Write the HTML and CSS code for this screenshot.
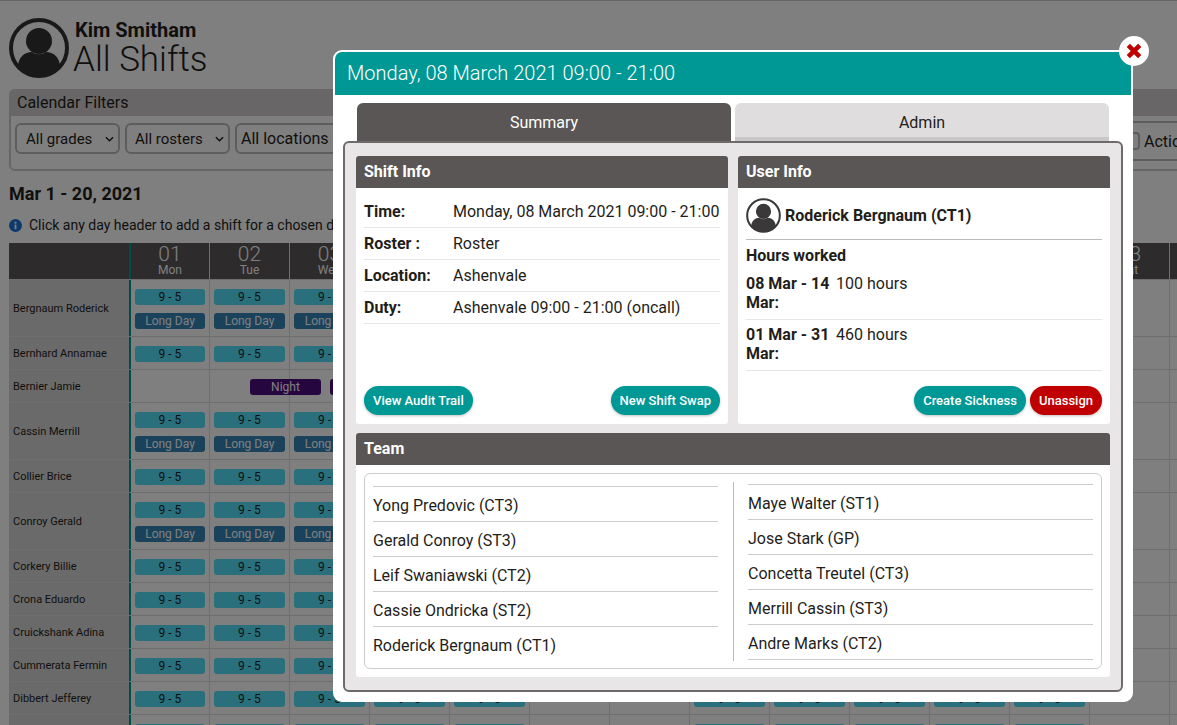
FILE: index.html
```html
<!DOCTYPE html>
<html lang="en">
<head>
    <meta charset="UTF-8">
    <title>All Shifts</title>
    <link rel="stylesheet" href="styles.css">
</head>
<body>
    <div class="page">
        <header class="page-head">
            <svg class="avatar avatar-lg" viewBox="0 0 60 60"><circle cx="30" cy="30" r="28" fill="#fff" stroke="#333" stroke-width="4"/><circle cx="30" cy="23" r="13" fill="#333"/><path d="M9 49c0-10 7-15 14-15 4 3 10 3 14 0 7 0 14 5 14 15-5 6-13 9-21 9s-16-3-21-9z" fill="#333"/></svg>
            <div class="page-titles">
                <div class="user-name">Kim Smitham</div>
                <h1>All Shifts</h1>
            </div>
        </header>

        <section class="filters">
            <div class="filters-title">Calendar Filters</div>
            <div class="filters-body">
                <div class="select select-grades">All grades<svg viewBox="0 0 10 6"><path d="M1 1l4 4 4-4" fill="none" stroke="#222" stroke-width="1.6"/></svg></div>
                <div class="select select-rosters">All rosters<svg viewBox="0 0 10 6"><path d="M1 1l4 4 4-4" fill="none" stroke="#222" stroke-width="1.6"/></svg></div>
                <div class="select select-locations">All locations<svg viewBox="0 0 10 6"><path d="M1 1l4 4 4-4" fill="none" stroke="#222" stroke-width="1.6"/></svg></div>
                <div class="filter-actions">
                    <span class="select-end"></span>
                    <span>Actions</span>
                </div>
            </div>
        </section>

        <h2 class="range">Mar 1 - 20, 2021</h2>
        <p class="hint">
            <svg viewBox="0 0 14 14"><circle cx="7" cy="7" r="7" fill="#1a73d8"/><rect x="6" y="6" width="2" height="5" fill="#fff"/><rect x="6" y="3" width="2" height="2" fill="#fff"/></svg>
            Click any day header to add a shift for a chosen day
        </p>

        <div class="calendar">
            <div class="cal-row cal-head">
                <div class="cal-name"></div>
                <div class="day"><b>01</b>Mon</div><div class="day"><b>02</b>Tue</div><div class="day"><b>03</b>Wed</div><div class="day"><b>04</b>Thu</div><div class="day"><b>05</b>Fri</div><div class="day"><b>06</b>Sat</div><div class="day"><b>07</b>Sun</div><div class="day"><b>08</b>Mon</div><div class="day"><b>09</b>Tue</div><div class="day"><b>10</b>Wed</div><div class="day"><b>11</b>Thu</div><div class="day"><b>12</b>Fri</div><div class="day"><b>13</b>Sat</div><div class="day"><b>14</b>Sun</div>
            </div>
            <div class="cal-row">
                <div class="cal-name">Bergnaum Roderick</div>
                <div class="cell"><span class="pill">9 - 5</span><span class="pill pill-long">Long Day</span></div><div class="cell"><span class="pill">9 - 5</span><span class="pill pill-long">Long Day</span></div><div class="cell"><span class="pill">9 - 5</span><span class="pill pill-long">Long Day</span></div><div class="cell"></div><div class="cell"></div><div class="cell"></div><div class="cell"></div><div class="cell"></div><div class="cell"></div><div class="cell"></div><div class="cell"></div><div class="cell"></div><div class="cell"></div><div class="cell"></div>
            </div>
            <div class="cal-row">
                <div class="cal-name">Bernhard Annamae</div>
                <div class="cell"><span class="pill">9 - 5</span></div><div class="cell"><span class="pill">9 - 5</span></div><div class="cell"><span class="pill">9 - 5</span></div><div class="cell"></div><div class="cell"></div><div class="cell"></div><div class="cell"></div><div class="cell"></div><div class="cell"></div><div class="cell"></div><div class="cell"></div><div class="cell"></div><div class="cell"></div><div class="cell"></div>
            </div>
            <div class="cal-row">
                <div class="cal-name">Bernier Jamie</div>
                <div class="cell"></div><div class="cell"><span class="pill pill-night">Night</span></div><div class="cell"><span class="pill pill-night">Night</span></div><div class="cell"></div><div class="cell"></div><div class="cell"></div><div class="cell"></div><div class="cell"></div><div class="cell"></div><div class="cell"></div><div class="cell"></div><div class="cell"></div><div class="cell"></div><div class="cell"></div>
            </div>
            <div class="cal-row">
                <div class="cal-name">Cassin Merrill</div>
                <div class="cell"><span class="pill">9 - 5</span><span class="pill pill-long">Long Day</span></div><div class="cell"><span class="pill">9 - 5</span><span class="pill pill-long">Long Day</span></div><div class="cell"><span class="pill">9 - 5</span><span class="pill pill-long">Long Day</span></div><div class="cell"></div><div class="cell"></div><div class="cell"></div><div class="cell"></div><div class="cell"></div><div class="cell"></div><div class="cell"></div><div class="cell"></div><div class="cell"></div><div class="cell"></div><div class="cell"></div>
            </div>
            <div class="cal-row">
                <div class="cal-name">Collier Brice</div>
                <div class="cell"><span class="pill">9 - 5</span></div><div class="cell"><span class="pill">9 - 5</span></div><div class="cell"><span class="pill">9 - 5</span></div><div class="cell"></div><div class="cell"></div><div class="cell"></div><div class="cell"></div><div class="cell"></div><div class="cell"></div><div class="cell"></div><div class="cell"></div><div class="cell"></div><div class="cell"></div><div class="cell"></div>
            </div>
            <div class="cal-row">
                <div class="cal-name">Conroy Gerald</div>
                <div class="cell"><span class="pill">9 - 5</span><span class="pill pill-long">Long Day</span></div><div class="cell"><span class="pill">9 - 5</span><span class="pill pill-long">Long Day</span></div><div class="cell"><span class="pill">9 - 5</span><span class="pill pill-long">Long Day</span></div><div class="cell"></div><div class="cell"></div><div class="cell"></div><div class="cell"></div><div class="cell"></div><div class="cell"></div><div class="cell"></div><div class="cell"></div><div class="cell"></div><div class="cell"></div><div class="cell"></div>
            </div>
            <div class="cal-row">
                <div class="cal-name">Corkery Billie</div>
                <div class="cell"><span class="pill">9 - 5</span></div><div class="cell"><span class="pill">9 - 5</span></div><div class="cell"><span class="pill">9 - 5</span></div><div class="cell"></div><div class="cell"></div><div class="cell"></div><div class="cell"></div><div class="cell"></div><div class="cell"></div><div class="cell"></div><div class="cell"></div><div class="cell"></div><div class="cell"></div><div class="cell"></div>
            </div>
            <div class="cal-row">
                <div class="cal-name">Crona Eduardo</div>
                <div class="cell"><span class="pill">9 - 5</span></div><div class="cell"><span class="pill">9 - 5</span></div><div class="cell"><span class="pill">9 - 5</span></div><div class="cell"></div><div class="cell"></div><div class="cell"></div><div class="cell"></div><div class="cell"></div><div class="cell"></div><div class="cell"></div><div class="cell"></div><div class="cell"></div><div class="cell"></div><div class="cell"></div>
            </div>
            <div class="cal-row">
                <div class="cal-name">Cruickshank Adina</div>
                <div class="cell"><span class="pill">9 - 5</span></div><div class="cell"><span class="pill">9 - 5</span></div><div class="cell"><span class="pill">9 - 5</span></div><div class="cell"></div><div class="cell"></div><div class="cell"></div><div class="cell"></div><div class="cell"></div><div class="cell"></div><div class="cell"></div><div class="cell"></div><div class="cell"></div><div class="cell"></div><div class="cell"></div>
            </div>
            <div class="cal-row">
                <div class="cal-name">Cummerata Fermin</div>
                <div class="cell"><span class="pill">9 - 5</span></div><div class="cell"><span class="pill">9 - 5</span></div><div class="cell"><span class="pill">9 - 5</span></div><div class="cell"></div><div class="cell"></div><div class="cell"></div><div class="cell"></div><div class="cell"></div><div class="cell"></div><div class="cell"></div><div class="cell"></div><div class="cell"></div><div class="cell"></div><div class="cell"></div>
            </div>
            <div class="cal-row">
                <div class="cal-name">Dibbert Jefferey</div>
                <div class="cell"><span class="pill">9 - 5</span></div><div class="cell"><span class="pill">9 - 5</span></div><div class="cell"><span class="pill">9 - 5</span></div><div class="cell"><span class="pill">9 - 5</span></div><div class="cell"><span class="pill">9 - 5</span></div><div class="cell"></div><div class="cell"></div><div class="cell"><span class="pill">9 - 5</span></div><div class="cell"><span class="pill">9 - 5</span></div><div class="cell"><span class="pill">9 - 5</span></div><div class="cell"><span class="pill">9 - 5</span></div><div class="cell"><span class="pill">9 - 5</span></div><div class="cell"></div><div class="cell"></div>
            </div>
            <div class="cal-row">
                <div class="cal-name">Durgan Lilla</div>
                <div class="cell"><span class="pill">9 - 5</span></div><div class="cell"><span class="pill">9 - 5</span></div><div class="cell"><span class="pill">9 - 5</span></div><div class="cell"><span class="pill">9 - 5</span></div><div class="cell"><span class="pill">9 - 5</span></div><div class="cell"></div><div class="cell"></div><div class="cell"><span class="pill">9 - 5</span></div><div class="cell"><span class="pill">9 - 5</span></div><div class="cell"><span class="pill">9 - 5</span></div><div class="cell"><span class="pill">9 - 5</span></div><div class="cell"><span class="pill">9 - 5</span></div><div class="cell"></div><div class="cell"></div>
            </div>
        </div>
    </div>

    <div class="overlay"></div>

    <div class="modal">
        <button class="modal-close" type="button" aria-label="Close">
            <svg viewBox="0 0 14 14"><path d="M2 2l10 10M12 2L2 12" stroke="#c00000" stroke-width="4" fill="none"/></svg>
        </button>
        <div class="modal-title">Monday, 08 March 2021 09:00 - 21:00</div>
        <div class="tabs">
            <div class="tab tab-active">Summary</div>
            <div class="tab">Admin</div>
        </div>
        <div class="tab-body">
            <div class="panels">
                <section class="panel">
                    <h3 class="panel-head">Shift Info</h3>
                    <div class="panel-body">
                        <div class="info-row"><b>Time:</b><span>Monday, 08 March 2021 09:00 - 21:00</span></div>
                        <div class="info-row"><b>Roster :</b><span>Roster</span></div>
                        <div class="info-row"><b>Location:</b><span>Ashenvale</span></div>
                        <div class="info-row"><b>Duty:</b><span>Ashenvale 09:00 - 21:00 (oncall)</span></div>
                        <div class="panel-actions panel-actions-split">
                            <a class="btn">View Audit Trail</a>
                            <a class="btn">New Shift Swap</a>
                        </div>
                    </div>
                </section>
                <section class="panel">
                    <h3 class="panel-head">User Info</h3>
                    <div class="panel-body panel-body-user">
                        <div class="user-row">
                            <svg class="avatar avatar-sm" viewBox="0 0 60 60"><circle cx="30" cy="30" r="28" fill="#fff" stroke="#3a3839" stroke-width="3.5"/><circle cx="30" cy="23" r="13" fill="#3a3839"/><path d="M9 49c0-10 7-15 14-15 4 3 10 3 14 0 7 0 14 5 14 15-5 6-13 9-21 9s-16-3-21-9z" fill="#3a3839"/></svg>
                            <b>Roderick Bergnaum (CT1)</b>
                        </div>
                        <div class="hours-title">Hours worked</div>
                        <div class="hours-row"><b>08 Mar - 14 Mar:</b><span>100 hours</span></div>
                        <div class="hours-row"><b>01 Mar - 31 Mar:</b><span>460 hours</span></div>
                        <div class="panel-actions">
                            <a class="btn">Create Sickness</a>
                            <a class="btn btn-danger">Unassign</a>
                        </div>
                    </div>
                </section>
            </div>
            <section class="panel panel-team">
                <h3 class="panel-head">Team</h3>
                <div class="team-box">
                    <ul class="team-col team-col-left">
                        <li>Yong Predovic (CT3)</li>
                        <li>Gerald Conroy (ST3)</li>
                        <li>Leif Swaniawski (CT2)</li>
                        <li>Cassie Ondricka (ST2)</li>
                        <li>Roderick Bergnaum (CT1)</li>
                    </ul>
                    <ul class="team-col team-col-right">
                        <li>Maye Walter (ST1)</li>
                        <li>Jose Stark (GP)</li>
                        <li>Concetta Treutel (CT3)</li>
                        <li>Merrill Cassin (ST3)</li>
                        <li>Andre Marks (CT2)</li>
                    </ul>
                </div>
            </section>
        </div>
    </div>
</body>
</html>
```

FILE: styles.css
```css
* {
    box-sizing: border-box;
}

html, body {
    height: 100%;
}

body {
    margin: 0;
    overflow: hidden;
    background: #fff;
    color: #1f1e1a;
    font-family: Roboto, "Liberation Sans", sans-serif;
    font-size: 16px;
}

/* page behind the dialog */
.page {
    width: 1400px;
    padding: 18px 0 0 9px;
    border-top: 2px solid #ccc;
    margin-top: -1px;
}

.page-head {
    display: flex;
    align-items: center;
    gap: 4px;
    height: 60px;
    margin-top: -1px;
}

.avatar {
    display: block;
    flex: none;
}

.avatar-lg {
    width: 60px;
    height: 60px;
}

.avatar-sm {
    width: 35px;
    height: 35px;
}

.page-titles {
    padding-top: 2px;
}

.user-name {
    margin-left: 2px;
    font-size: 20px;
    font-weight: 700;
    line-height: 22px;
}

.page-titles h1 {
    margin: 0;
    font-size: 35px;
    font-weight: 300;
    line-height: 38px;
}

.filters {
    height: 82px;
    margin-top: 11px;
    border: 2px solid #ccc;
    border-radius: 6px;
}

.filters-title {
    height: 27px;
    margin: -2px -2px 0;
    padding-left: 8px;
    border-radius: 6px 6px 0 0;
    background: #d0cdcd;
    line-height: 27px;
}

.filters-body {
    display: flex;
    align-items: flex-start;
    padding: 7px 0 0 4px;
}

.select {
    display: flex;
    align-items: center;
    justify-content: space-between;
    height: 31px;
    padding: 0 4px 0 9px;
    margin-right: 5px;
    border: 2px solid #bbb;
    border-radius: 6px;
    font-size: 15px;
    white-space: nowrap;
}

.select svg {
    width: 9px;
    height: 6px;
}

.select-grades {
    width: 105px;
}

.select-rosters {
    width: 105px;
    padding-left: 8px;
}

.select-locations {
    width: 160px;
    padding-left: 4px;
    font-size: 16px;
}

.filter-actions {
    display: flex;
    align-items: center;
    gap: 4px;
    height: 40px;
    margin-top: -2px;
    margin-left: auto;
    width: 285px;
    border-top: 2px solid #bbb;
    border-bottom: 2px solid #bbb;
}

.select-end {
    width: 27px;
    height: 18px;
    border: 2px solid #bbb;
    border-radius: 0 4px 4px 0;
}

.range {
    margin: 12px 0 0;
    font-size: 18px;
    font-weight: 700;
    line-height: 22px;
}

.hint {
    display: flex;
    align-items: center;
    gap: 7px;
    height: 20px;
    margin: 10px 0 0;
    font-size: 14px;
    white-space: nowrap;
}

.hint svg {
    width: 13px;
    height: 13px;
}

/* calendar grid */
.calendar {
    margin-top: 8px;
}

.cal-row {
    display: grid;
    grid-template-columns: 122px 79px repeat(13, 80px);
    border-bottom: 1px solid #dcdcdc;
}

.cal-head {
    height: 37px;
}

.cal-head > div {
    background: #5a5657;
    color: #fff;
}

.cal-name {
    display: flex;
    align-items: center;
    padding: 1px 0 0 4px;
    border-right: 2px solid #009894;
    background: #d6d4d4;
    font-size: 11px;
}

.day {
    border-right: 1px solid #ddd;
    font-size: 12px;
    line-height: 12px;
    text-align: center;
}

.day b {
    display: block;
    padding-top: 2px;
    font-size: 21px;
    font-weight: 300;
    line-height: 19px;
}

.cell {
    display: flex;
    flex-direction: column;
    gap: 8px;
    min-height: 32px;
    padding: 9px 4px 7px;
    border-right: 1px solid #ddd;
}

.pill {
    display: block;
    height: 16px;
    border-radius: 3px;
    background: #54def8;
    font-size: 12px;
    line-height: 16px;
    text-align: center;
}

.pill-long {
    background: #3484b6;
    color: #fff;
}

.pill-night {
    position: relative;
    left: 36px;
    background: #4c0c7e;
    color: #fff;
}

.overlay {
    position: fixed;
    inset: 0;
    background: rgba(0, 0, 0, 0.5);
}

/* dialog */
.modal {
    position: absolute;
    left: 333px;
    top: 50px;
    width: 800px;
    height: 652px;
    border: 2px solid #fff;
    border-radius: 9px;
    background: #fff;
}

.modal-close {
    position: absolute;
    top: -16px;
    right: -18px;
    display: flex;
    align-items: center;
    justify-content: center;
    width: 30px;
    height: 30px;
    padding: 0;
    border: 0;
    border-radius: 50%;
    background: #fff;
}

.modal-close svg {
    width: 16px;
    height: 16px;
}

.modal-title {
    height: 43px;
    padding-left: 12px;
    border-radius: 7px 7px 0 0;
    background: #009894;
    color: #fff;
    font-size: 20px;
    font-weight: 300;
    line-height: 43px;
}

.tabs {
    display: flex;
    gap: 4px;
    margin-top: 8px;
    padding-left: 22px;
}

.tab {
    width: 374px;
    height: 38px;
    border-bottom: 4px solid #c9c7c7;
    border-radius: 6px 6px 0 0;
    background: #dfdddd;
    line-height: 40px;
    text-align: center;
}

.tab-active {
    border-bottom: 0;
    background: #5a5655;
    color: #fff;
}

.tab-body {
    height: 551px;
    margin: 0 8px;
    padding: 13px 11px;
    border: 2px solid #6f6a6b;
    border-radius: 6px;
    background: #e8e6e7;
}

.panels {
    display: grid;
    grid-template-columns: 372px 372px;
    gap: 10px;
    height: 268px;
}

.panel {
    display: flex;
    flex-direction: column;
    border-radius: 3px;
    background: #fff;
}

.panel-head {
    flex: none;
    height: 32px;
    margin: 0;
    padding-left: 8px;
    border-radius: 3px 3px 0 0;
    background: #5a5655;
    color: #fff;
    font-size: 16px;
    font-weight: 700;
    line-height: 32px;
}

.panel-body {
    display: flex;
    flex: 1;
    flex-direction: column;
    padding: 8px;
}

.panel-body-user {
    padding-top: 10px;
}

.info-row {
    display: grid;
    grid-template-columns: 89px 1fr;
    align-items: center;
    height: 32px;
    border-bottom: 1px solid #e6e6e6;
    white-space: nowrap;
}

.panel-actions {
    display: flex;
    justify-content: flex-end;
    gap: 4px;
    margin-top: auto;
    margin-bottom: 1px;
}

.panel-actions-split {
    justify-content: space-between;
}

.btn {
    display: block;
    height: 29px;
    padding: 0 9px;
    border-radius: 15px;
    background: #009894;
    box-shadow: 0 1px 3px rgba(0, 0, 0, 0.25);
    color: #fff;
    font-size: 13px;
    font-weight: 500;
    line-height: 29px;
}

.btn-danger {
    background: #c00000;
}

.user-row {
    display: flex;
    align-items: center;
    gap: 4px;
    height: 42px;
    padding-bottom: 7px;
    border-bottom: 1px solid #bbb;
}

.hours-title {
    margin: 6px 0 3px;
    font-weight: 700;
    line-height: 20px;
}

.hours-row {
    display: grid;
    grid-template-columns: 90px 1fr;
    padding: 5px 0 7px;
    border-bottom: 1px solid #e6e6e6;
    line-height: 19px;
}

.hours-row b {
    padding-right: 2px;
}

.panel-team {
    height: 244px;
    margin-top: 9px;
}

.team-box {
    display: grid;
    grid-template-columns: 345px 345px;
    gap: 30px;
    height: 196px;
    margin: 8px 8px 0;
    padding: 8px;
    border: 1px solid #ccc;
    border-radius: 6px;
}

.team-col {
    position: relative;
    margin: 0;
    padding: 0;
    list-style: none;
}

.team-col-left {
    padding-top: 4px;
}

.team-col-right {
    padding-top: 2px;
}

.team-col-right::before {
    content: "";
    position: absolute;
    left: -15px;
    top: 0;
    bottom: 0;
    border-left: 1px solid #bbb;
}

.team-col li {
    height: 35px;
    border-top: 1px solid #ccc;
    line-height: 37px;
}

.team-col-right li:last-child {
    height: 36px;
    border-bottom: 1px solid #ccc;
}
```
